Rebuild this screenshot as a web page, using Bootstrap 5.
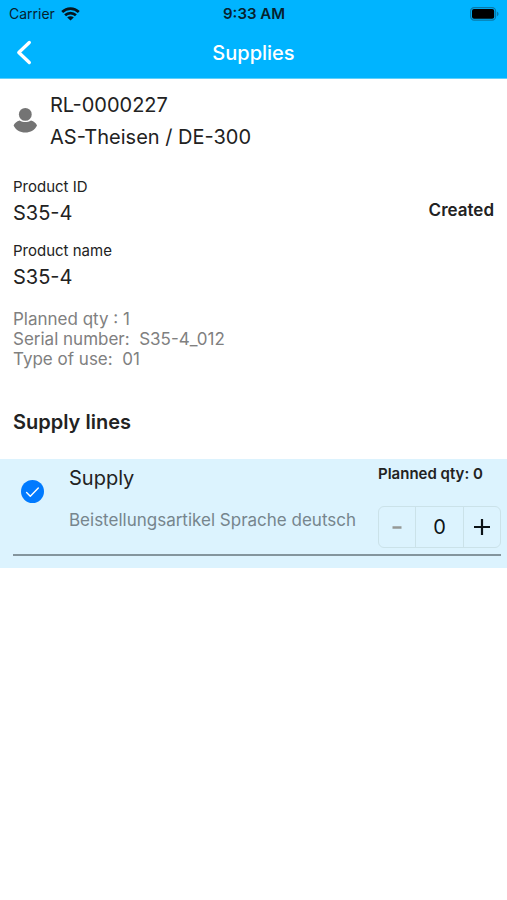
<!DOCTYPE html>
<html lang="en">
<head>
<meta charset="utf-8">
<meta name="viewport" content="width=device-width, initial-scale=1">
<title>Supplies</title>
<link href="https://cdn.jsdelivr.net/npm/bootstrap@5.3.0/dist/css/bootstrap.min.css" rel="stylesheet">
<style>
body { font-family: Inter, "Liberation Sans", sans-serif; color: #222; background: #fff; }
.app-header { background: #00b4ff; border-bottom: 1px solid #5fd0fb; }
.status-bar { height: 27px; padding: 0 8px 0 9px; font-size: 14px; line-height: 20px; color: #06222f; }
.status-side { flex: 1 1 0; gap: 6px; }
.status-time { font-size: 15px; line-height: 20px; padding-top: 1px; }
.title-bar { height: 51px; padding: 0 16px; }
.title-side { flex: 1 1 0; }
.title-text { font-size: 20px; line-height: 24px; font-weight: 500; }
.page-body { padding: 10px 13px 0; }
.text-main { font-size: 20px; line-height: 32px; }
.party { gap: 13px; }
.field-label { font-size: 15px; line-height: 20px; font-weight: 400; }
.field-value { font-size: 20px; line-height: 32px; }
.product { margin-top: 24px; }
.field + .field { margin-top: 12px; }
.state { font-size: 17px; line-height: 24px; padding-top: 21px; }
.details { margin-top: 16px; font-size: 17px; line-height: 20px; color: #808080; }
.section-title { font-size: 20px; line-height: 32px; margin: 37px 0 21px; }
.supply-line { background: #dcf3fe; padding: 0 6px 12px 13px; }
.line-inner { border-bottom: 2px solid #84959d; padding: 3px 0 6px; }
.line-check { width: 39px; padding: 18px 0 0 8px; }
.line-check .form-check-input { width: 23px; height: 23px; border-radius: 50%; border: 0; }
.line-check .form-check-input:checked { background-color: #007aff; background-size: 23px;
  background-image: url("data:image/svg+xml,%3Csvg xmlns='http://www.w3.org/2000/svg' viewBox='0 0 23 23'%3E%3Cpath d='M5.6 12.4l3.7 3.8 8-8.2' fill='none' stroke='white' stroke-width='1.4' stroke-linecap='round' stroke-linejoin='round'/%3E%3C/svg%3E"); }
.line-name { padding-left: 17px; }
.line-desc { font-size: 17px; line-height: 24px; margin-top: 14px; color: #76858d; }
.line-qty { width: 123px; }
.line-planned { font-size: 15px; line-height: 24px; }
.stepper { height: 42px; margin-top: 20px; border: 1px solid #cbe2e9; border-radius: 6px; }
.stepper .btn { width: 36px; border: 0; border-radius: 0; }
.stepper .form-control { flex: 1 1 0; min-width: 0; font-size: 20px; line-height: 24px; color: #0c1317; border-width: 0 1px; border-color: #cbe2e9; }
</style>
<script src="https://cdn.jsdelivr.net/npm/bootstrap@5.3.0/dist/js/bootstrap.bundle.min.js"></script>
</head>
<body>
<header class="app-header">
  <div class="status-bar d-flex align-items-center">
    <div class="status-side d-flex align-items-center">
      <span>Carrier</span>
      <svg width="19" height="14" viewBox="0 0 19 14" aria-hidden="true"><g fill="none" stroke="#06161e" stroke-width="2.7"><path d="M1.2 5a11.8 11.8 0 0 1 16.6 0"/><path d="M4.1 8.3a7.7 7.7 0 0 1 10.8 0"/></g><path d="M9.5 13.6 6.2 10.5a4.7 4.7 0 0 1 6.6 0z" fill="#06161e"/></svg>
    </div>
    <span class="status-time fw-semibold">9:33 AM</span>
    <div class="status-side d-flex justify-content-end">
      <svg width="29" height="14" viewBox="0 0 29 14" aria-hidden="true"><rect x=".6" y=".6" width="25" height="12.6" rx="3.6" fill="none" stroke="#0879aa" stroke-width="1.2"/><rect x="2" y="2" width="22.2" height="9.8" rx="2" fill="#000"/><path d="M27 4.8c2 .6 2 3.8 0 4.4z" fill="#0879aa"/></svg>
    </div>
  </div>
  <nav class="title-bar d-flex align-items-center text-white" aria-label="Page">
    <div class="title-side d-flex">
      <button type="button" class="btn border-0 p-0 d-flex text-white" aria-label="Back"><svg width="16" height="25" viewBox="0 0 16 25" aria-hidden="true"><path d="M13.3 2.5 2.8 12.5 13.3 22.5" fill="none" stroke="currentColor" stroke-width="3.3" stroke-linecap="round" stroke-linejoin="round"/></svg></button>
    </div>
    <h1 class="title-text mb-0">Supplies</h1>
    <div class="title-side"></div>
  </nav>
</header>
<main>
  <div class="page-body">
    <section class="party d-flex align-items-center">
      <svg width="24" height="28" viewBox="0 0 24 28" fill="#747474" aria-hidden="true"><circle cx="12.3" cy="7.4" r="6.4"/><path d="M6.6 13.4c3.600 2 7.800 2 11.400 0 3 .8 5 2.600 6 5-2 4.400-6.500 7-11.700 7S2.600 22.800.6 18.400c1-2.400 3-4.200 6-5z"/></svg>
      <div class="text-main"><div>RL-0000227</div><div>AS-Theisen / DE-300</div></div>
    </section>
    <section class="product d-flex justify-content-between">
      <dl class="mb-0">
        <div class="field"><dt class="field-label">Product ID</dt><dd class="field-value mb-0">S35-4</dd></div>
        <div class="field"><dt class="field-label">Product name</dt><dd class="field-value mb-0">S35-4</dd></div>
      </dl>
      <div class="state fw-semibold">Created</div>
    </section>
    <section class="details">
      <div>Planned qty : 1</div>
      <div>Serial number:&nbsp; S35-4_012</div>
      <div>Type of use:&nbsp; 01</div>
    </section>
    <h2 class="section-title fw-semibold">Supply lines</h2>
  </div>
  <section class="supply-line">
    <div class="line-inner d-flex">
      <div class="line-check flex-shrink-0"><input class="form-check-input d-block m-0" type="checkbox" id="line1" checked></div>
      <div class="line-name flex-grow-1">
        <label class="text-main d-block" for="line1">Supply</label>
        <div class="line-desc">Beistellungsartikel Sprache deutsch</div>
      </div>
      <div class="line-qty flex-shrink-0">
        <div class="line-planned fw-semibold">Planned qty: 0</div>
        <div class="stepper d-flex">
          <button type="button" class="btn p-0 d-flex align-items-center justify-content-center flex-shrink-0" aria-label="Decrease" disabled><svg width="10" height="3" viewBox="0 0 10 3" aria-hidden="true"><path d="M.5 1.5h9" stroke="#706a60" stroke-width="2.5"/></svg></button>
          <input class="form-control bg-transparent rounded-0 text-center p-0" type="text" inputmode="numeric" value="0" aria-label="Quantity">
          <button type="button" class="btn p-0 d-flex align-items-center justify-content-center flex-shrink-0" aria-label="Increase"><svg width="16" height="16" viewBox="0 0 16 16" aria-hidden="true"><path d="M0 8h16M8 0v16" stroke="#0c1317" stroke-width="2.2"/></svg></button>
        </div>
      </div>
    </div>
  </section>
</main>
</body>
</html>
